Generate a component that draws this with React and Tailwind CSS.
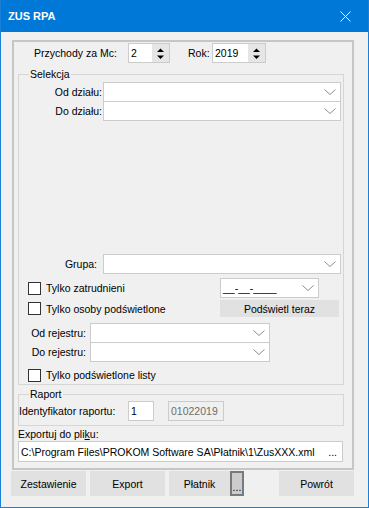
import React from 'react';

const Chevron = () => (
  <svg width="12" height="6" viewBox="0 0 12 6" className="shrink-0">
    <polyline points="0.5,0.5 6,5.5 11.5,0.5" fill="none" stroke="#8c8c8c" strokeWidth="1" />
  </svg>
);

const Combo = ({ className = '', children }) => (
  <div className={`flex items-center justify-between border border-[#cccccc] bg-white pl-[2px] pr-[4px] ${className}`}>
    <span>{children}</span>
    <Chevron />
  </div>
);

const Spin = ({ value, className = '' }) => (
  <div className={`flex h-5 border border-[#cccccc] bg-white ${className}`}>
    <span className="flex-1 pl-[2px] leading-[18px]">{value}</span>
    <div className="w-[17px] bg-[#e6e6e6]">
      <svg width="17" height="18" viewBox="0 0 17 18">
        <polygon points="5,8 12,8 8.5,4.5" fill="#000" />
        <polygon points="5,11.5 12,11.5 8.5,15" fill="#000" />
      </svg>
    </div>
  </div>
);

const Check = ({ label }) => (
  <div className="flex items-center">
    <span className="h-[13px] w-[13px] border border-[#333333] bg-white" />
    <span className="ml-[5px]">{label}</span>
  </div>
);

const Btn = ({ children, className = 'h-[25px] w-[75px]' }) => (
  <div className={`flex items-center justify-center bg-[#e1e1e1] ${className}`}>{children}</div>
);

export default function App() {
  return (
    <div className="flex h-[508px] w-[369px] flex-col whitespace-nowrap border-x border-b border-[#1a7fd6] bg-[#f0f0f0] font-['Liberation_Sans',Arial,sans-serif] text-[10.5px] leading-[14px] text-black">
      {/* Title bar */}
      <div className="flex h-8 shrink-0 items-center justify-between bg-[#0078d7] pl-[7px] pr-[17px]">
        <span className="text-[11px] font-bold text-white">ZUS RPA</span>
        <svg width="11" height="11" viewBox="0 0 11 11">
          <path d="M0.5 0.5 L10.5 10.5 M10.5 0.5 L0.5 10.5" stroke="#fff" strokeWidth="1" />
        </svg>
      </div>

      {/* Main panel */}
      <div className="ml-[11px] mt-2 flex h-[430px] w-[342px] flex-col border-2 border-[#c6c6c6] pl-1 pt-px">
        <div className="flex h-5 items-center">
          <span className="ml-4 w-[94px]">Przychody za Mc:</span>
          <Spin value="2" className="w-[42px]" />
          <span className="ml-[18px] w-[24px]">Rok:</span>
          <Spin value="2019" className="w-[54px]" />
        </div>

        {/* Selekcja */}
        <fieldset className="mt-1 w-[326px] border border-[#d6d6d6] pb-[2px]">
          <legend className="ml-[10px] px-[1px]">Selekcja</legend>
          <div className="flex flex-col pt-px">
            <div className="flex items-center">
              <span className="w-[84px] pr-[1px] text-right">Od działu:</span>
              <Combo className="h-5 w-[238px]" />
            </div>
            <div className="-mt-px flex items-center">
              <span className="w-[84px] pr-[1px] text-right">Do działu:</span>
              <Combo className="h-5 w-[238px]" />
            </div>
            <div className="mt-[133px] flex items-center">
              <span className="w-[84px] pr-[6px] text-right">Grupa:</span>
              <Combo className="h-5 w-[238px]" />
            </div>
            <div className="mt-1 flex items-center">
              <div className="ml-[9px] w-[192px]">
                <Check label="Tylko zatrudnieni" />
              </div>
              <Combo className="h-5 w-[99px]">__-__-____</Combo>
            </div>
            <div className="mt-[2px] flex items-center">
              <div className="ml-[9px] w-[192px]">
                <Check label="Tylko osoby podświetlone" />
              </div>
              <Btn className="h-[17px] w-[119px]">Podświetl teraz</Btn>
            </div>
            <div className="mt-[6px] flex items-center">
              <span className="w-[71px] pr-1 text-right">Od rejestru:</span>
              <Combo className="h-5 w-[180px]" />
            </div>
            <div className="-mt-px flex items-center">
              <span className="w-[71px] pr-1 text-right">Do rejestru:</span>
              <Combo className="h-5 w-[180px]" />
            </div>
            <div className="ml-[9px] mt-[6px]">
              <Check label="Tylko podświetlone listy" />
            </div>
          </div>
        </fieldset>

        {/* Raport */}
        <fieldset className="mt-[2px] w-[326px] border border-[#d6d6d6] pb-1">
          <legend className="ml-[10px] px-[1px]">Raport</legend>
          <div className="flex items-center">
            <span className="w-[109px]">Identyfikator raportu:</span>
            <div className="flex h-5 w-[26px] items-center border border-[#cccccc] bg-white pl-[2px]">1</div>
            <div className="ml-[14px] flex h-5 w-[56px] items-center border border-[#cccccc] pl-[2px] text-[#6d6d6d]">01022019</div>
          </div>
        </fieldset>

        <span className="mt-px">
          Exportuj do pli<span className="underline">k</span>u:
        </span>
        <div className="flex h-[21px] w-[325px] items-center justify-between border border-[#cccccc] bg-white pl-[2px] pr-[5px]">
          <span>C:\Program Files\PROKOM Software SA\Płatnik\1\ZusXXX.xml</span>
          <span>...</span>
        </div>
      </div>

      {/* Buttons */}
      <div className="ml-[10px] mt-px flex">
        <Btn>Zestawienie</Btn>
        <Btn className="ml-1 h-[25px] w-[75px]">Export</Btn>
        <Btn className="ml-1 h-[25px] w-[61px]">Płatnik</Btn>
        <div className="flex h-[25px] w-[14px] items-end justify-center border-2 border-[#7a7a7a] bg-[#cccccc] pb-[2px] leading-none">...</div>
        <Btn className="ml-[35px] h-[25px] w-[75px]">Powrót</Btn>
      </div>
    </div>
  );
}
